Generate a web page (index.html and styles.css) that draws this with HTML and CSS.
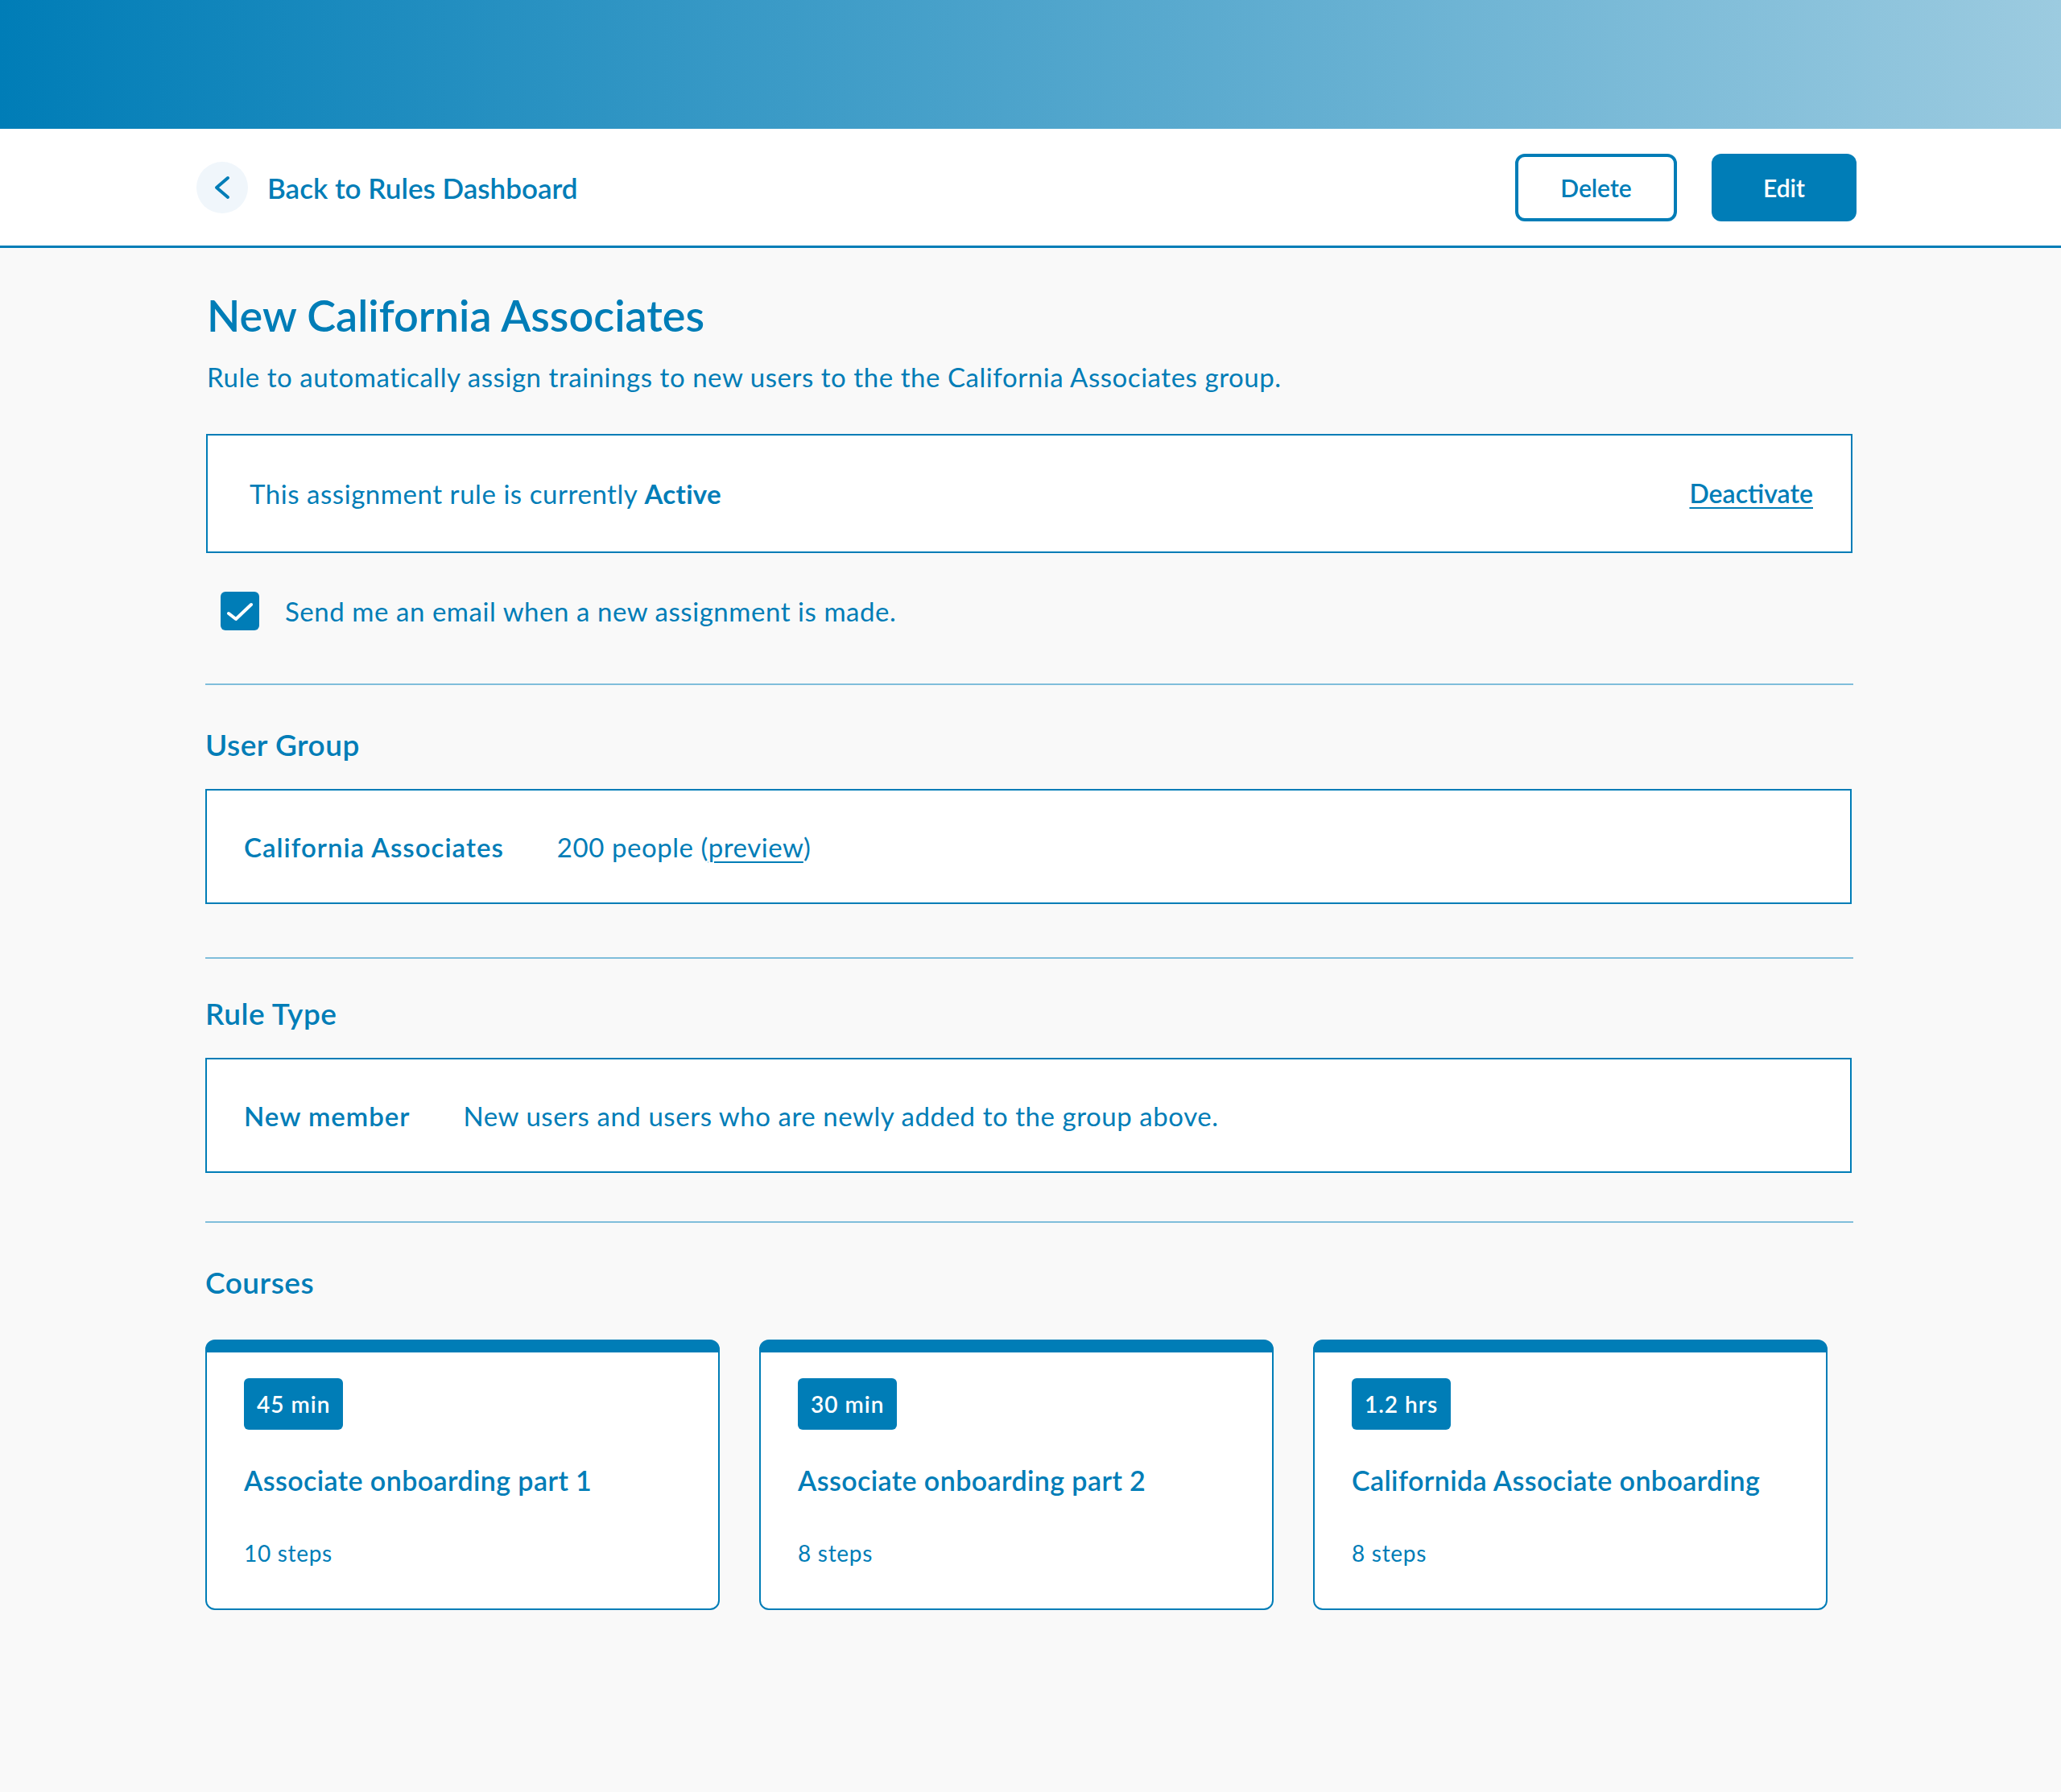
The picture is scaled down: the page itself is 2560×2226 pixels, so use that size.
FILE: index.html
```html
<!DOCTYPE html>
<html lang="en">
<head>
<meta charset="utf-8">
<title>New California Associates</title>
<link rel="stylesheet" href="styles.css">
</head>
<body>
<div class="hero"></div>
<header class="topbar">
  <a class="back" href="#">
    <span class="back-icon">
      <svg width="64" height="64" viewBox="0 0 64 64"><path d="M39 20 L25 32 L39 44" fill="none" stroke="#007db7" stroke-width="4" stroke-linecap="round" stroke-linejoin="round"/></svg>
    </span>
    <span class="back-text">Back to Rules Dashboard</span>
  </a>
  <div class="actions">
    <button class="btn btn-outline">Delete</button>
    <button class="btn btn-solid">Edit</button>
  </div>
</header>
<main class="main">
  <h1 class="title">New California Associates</h1>
  <p class="desc">Rule to automatically assign trainings to new users to the the California Associates group.</p>
  <div class="status">
    <span>This assignment rule is currently <strong>Active</strong></span>
    <a class="link" href="#">Deactivate</a>
  </div>
  <label class="check-row">
    <span class="checkbox">
      <svg width="48" height="48" viewBox="0 0 48 48"><path d="M10 27 L19 34 L38 16" fill="none" stroke="#fff" stroke-width="4" stroke-linecap="round" stroke-linejoin="round"/></svg>
    </span>
    <span>Send me an email when a new assignment is made.</span>
  </label>

  <hr class="divider divider-1">
  <h2 class="heading">User Group</h2>
  <div class="box">
    <span class="box-label">California Associates</span>
    <span>200 people (<a class="plain-link" href="#">preview</a>)</span>
  </div>

  <hr class="divider divider-2">
  <h2 class="heading heading-tight">Rule Type</h2>
  <div class="box">
    <span class="box-label">New member</span>
    <span>New users and users who are newly added to the group above.</span>
  </div>

  <hr class="divider divider-3">
  <h2 class="heading heading-courses">Courses</h2>
  <div class="cards">
    <div class="card">
      <span class="badge">45 min</span>
      <div class="card-title">Associate onboarding part 1</div>
      <div class="card-steps">10 steps</div>
    </div>
    <div class="card">
      <span class="badge">30 min</span>
      <div class="card-title">Associate onboarding part 2</div>
      <div class="card-steps">8 steps</div>
    </div>
    <div class="card">
      <span class="badge">1.2 hrs</span>
      <div class="card-title">Californida Associate onboarding</div>
      <div class="card-steps">8 steps</div>
    </div>
  </div>
</main>
</body>
</html>
```

FILE: styles.css
```css
* { box-sizing: border-box; }
html, body { margin: 0; padding: 0; }
body {
  background: #f9f9f9;
  color: #007db7;
  font-family: Lato, "Noto Sans", sans-serif;
  font-size: 33px;
  letter-spacing: 0.55px;
  line-height: 38px;
  min-height: 2226px;
}
a { color: inherit; }

.hero {
  height: 160px;
  background: linear-gradient(90deg, #007db7 0%, #9ccbe0 100%);
}

.topbar {
  height: 148px;
  background: #fff;
  border-bottom: 3px solid #007db7;
  display: flex;
  align-items: center;
  justify-content: space-between;
  padding: 0 254px 0 244px;
}
.back {
  display: flex;
  align-items: center;
  gap: 24px;
  text-decoration: none;
}
.back-icon {
  width: 64px;
  height: 64px;
  border-radius: 50%;
  background: #f0f6fb;
  display: block;
}
.back-icon svg { display: block; }
.back-text {
  font-size: 35px;
  font-weight: 600;
  letter-spacing: 0;
}
.actions { display: flex; gap: 43px; }
.btn {
  height: 84px;
  border-radius: 12px;
  font-family: inherit;
  font-size: 30px;
  font-weight: 600;
  cursor: pointer;
}
.btn-outline {
  width: 201px;
  background: #fff;
  color: #007db7;
  border: 4px solid #007db7;
}
.btn-solid {
  width: 180px;
  background: #007db7;
  color: #fff;
  border: 0;
}

.main {
  padding: 52px 258px 120px 255px;
}
.title {
  margin: 0;
  font-size: 54px;
  font-weight: 600;
  letter-spacing: 0;
  line-height: 63px;
  padding-left: 2px;
}
.desc {
  margin: 26px 0 0;
  padding-left: 2px;
}
.status {
  margin-top: 52px;
  height: 148px;
  margin-left: 1px;
  margin-right: 1px;
  background: #fff;
  border: 2px solid #007db7;
  display: flex;
  align-items: center;
  justify-content: space-between;
  padding: 0 47px 0 52px;
}
.status strong { font-weight: 700; letter-spacing: 0.3px; }
.link {
  font-size: 32px;
  font-weight: 600;
  letter-spacing: 0;
  text-decoration: underline;
  text-underline-offset: 5px;
  text-decoration-thickness: 2px;
}
.check-row {
  margin-top: 48px;
  margin-left: 19px;
  display: flex;
  align-items: center;
  gap: 32px;
}
.checkbox {
  width: 48px;
  height: 48px;
  border-radius: 6px;
  background: #007db7;
  display: block;
}
.checkbox svg { display: block; }

.divider {
  border: 0;
  height: 2px;
  background: #80bedb;
  margin: 0;
}
.divider-1 { margin-top: 66px; }
.divider-2 { margin-top: 66px; }
.divider-3 { margin-top: 60px; }

.heading {
  margin: 52px 0 34px;
  font-size: 37px;
  font-weight: 600;
  letter-spacing: 0.5px;
  line-height: 43px;
}
.heading-tight { margin: 46px 0 34px; }
.heading-courses { margin: 52px 0 50px; }

.box {
  height: 143px;
  margin-right: 2px;
  background: #fff;
  border: 2px solid #007db7;
  display: flex;
  align-items: center;
  padding-left: 46px;
  gap: 66px;
}
.box-label { font-weight: 600; letter-spacing: 1px; }
.plain-link {
  text-decoration: underline;
  text-underline-offset: 5px;
  text-decoration-thickness: 2px;
}

.cards {
  display: grid;
  grid-template-columns: repeat(3, 639px);
  column-gap: 49px;
}
.card {
  background: #fff;
  border: 2px solid #007db7;
  border-top-width: 16px;
  border-radius: 12px;
  padding: 32px 46px 52px;
}
.badge {
  display: inline-block;
  height: 64px;
  line-height: 64px;
  padding: 0 16px;
  background: #007db7;
  color: #fff;
  border-radius: 6px;
  font-size: 28px;
  font-weight: 600;
  letter-spacing: 1px;
}
.card-title {
  margin-top: 42px;
  font-size: 34px;
  font-weight: 600;
  letter-spacing: 0.4px;
  line-height: 41px;
}
.card-steps {
  margin-top: 53px;
  font-size: 28px;
  letter-spacing: 0.7px;
  line-height: 34px;
}
```
